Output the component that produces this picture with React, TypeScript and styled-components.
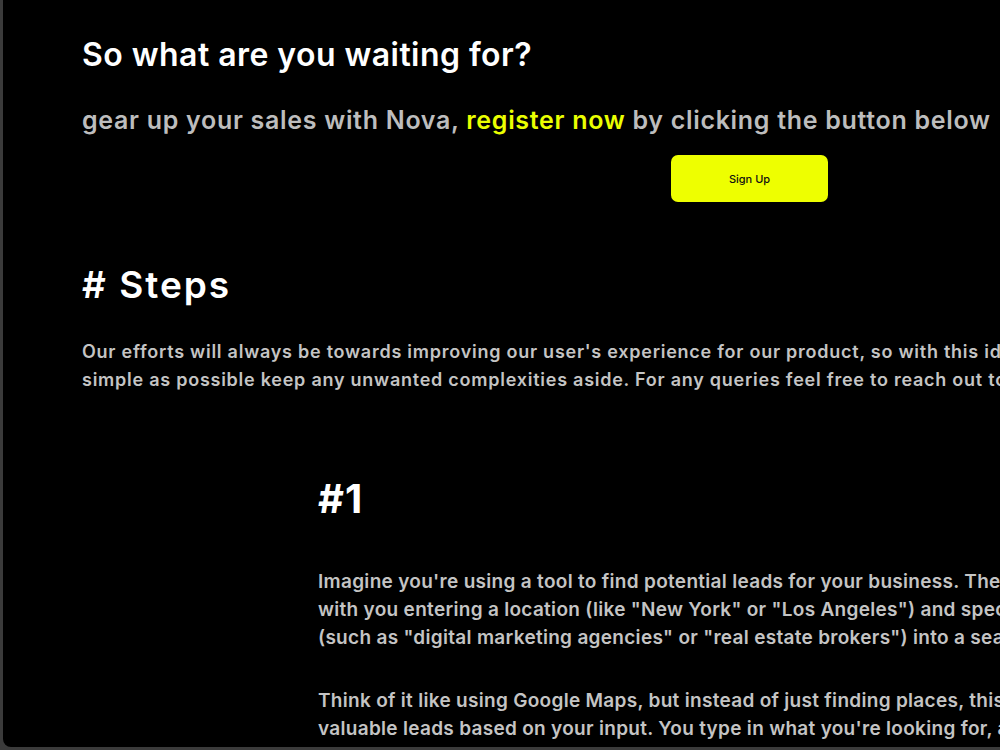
import styled, { createGlobalStyle } from "styled-components";

const GlobalStyle = createGlobalStyle`
    html, body {
        margin: 0;
        padding: 0;
        background: #3b3b3b;
        overflow: hidden;
    }
    * {
        box-sizing: border-box;
    }
`;

const steps = [
    {
        id: 1,
        paragraphs: [
            `Imagine you're using a tool to find potential leads for your business. The search starts with you entering a location (like "New York" or "Los Angeles") and specifying a niche (such as "digital marketing agencies" or "real estate brokers") into a search bar.`,
            `Think of it like using Google Maps, but instead of just finding places, this tool finds valuable leads based on your input. You type in what you're looking for, and it does the rest.`,
        ],
    },
];

const App = () => {
    return (
        <Frame>
            <GlobalStyle />
            <Panel>
                <Content>
                    <CallToAction>
                        <Title>So what are you waiting for?</Title>
                        <Tagline>
                            gear up your sales with Nova, <Highlight>register now</Highlight> by clicking the button below
                        </Tagline>
                        <ButtonRow>
                            <SignUpButton>Sign Up</SignUpButton>
                        </ButtonRow>
                    </CallToAction>

                    <Section>
                        <SectionTitle># Steps</SectionTitle>
                        <Intro>
                            Our efforts will always be towards improving our user's experience for our product, so with this idea in mind we have kept all the steps as
                            simple as possible keep any unwanted complexities aside. For any queries feel free to reach out to our support team anytime.
                        </Intro>
                        {steps.map((step) => (
                            <Step key={step.id}>
                                <StepNumber>#{step.id}</StepNumber>
                                {step.paragraphs.map((text, i) => (
                                    <StepText key={i}>{text}</StepText>
                                ))}
                            </Step>
                        ))}
                    </Section>
                </Content>
            </Panel>
        </Frame>
    );
};

export default App;

const Frame = styled.div`
    height: 750px;
    padding: 0 0 3px 3px;
    background: #3b3b3b;
`;

const Panel = styled.main`
    height: 100%;
    background: #000;
    border-bottom-left-radius: 8px;
    overflow: hidden;
    font-family: Inter, "Open Sans", sans-serif;
`;

const Content = styled.div`
    width: 1414px;
    padding: 34px 0 0 79px;
`;

const CallToAction = styled.div`
    display: flex;
    flex-direction: column;
`;

const Title = styled.h1`
    margin: 0;
    font-size: 32px;
    font-weight: 600;
    line-height: 42px;
    letter-spacing: 0.45px;
    color: #fff;
`;

const Tagline = styled.p`
    margin: 26px 0 0;
    font-size: 25px;
    font-weight: 600;
    line-height: 36px;
    letter-spacing: 0.7px;
    color: #bdbdbd;
`;

const Highlight = styled.span`
    color: #eaff00;
`;

const ButtonRow = styled.div`
    display: flex;
    justify-content: center;
    margin-top: 17px;
`;

const SignUpButton = styled.button`
    width: 157px;
    height: 47px;
    border: none;
    border-radius: 7px;
    background: #eeff00;
    color: #111;
    font-family: inherit;
    font-size: 11px;
    font-weight: 500;
    cursor: pointer;
`;

const Section = styled.section`
    margin-top: 59px;
`;

const SectionTitle = styled.h2`
    margin: 0;
    font-size: 37px;
    font-weight: 600;
    line-height: 48px;
    letter-spacing: 2px;
    color: #fff;
`;

const Intro = styled.p`
    margin: 29px 0 0;
    font-size: 18px;
    font-weight: 600;
    line-height: 28px;
    letter-spacing: 0.75px;
    color: #c4c4c4;
`;

const Step = styled.div`
    padding-left: 236px;
    margin-top: 80px;
`;

const StepNumber = styled.h3`
    margin: 0 0 44px;
    font-size: 40px;
    font-weight: 700;
    line-height: 50px;
    letter-spacing: 1px;
    color: #fff;
`;

const StepText = styled.p`
    margin: 0 0 35px;
    width: 830px;
    font-size: 19px;
    font-weight: 600;
    line-height: 28px;
    letter-spacing: 0.3px;
    color: #c4c4c4;
`;
